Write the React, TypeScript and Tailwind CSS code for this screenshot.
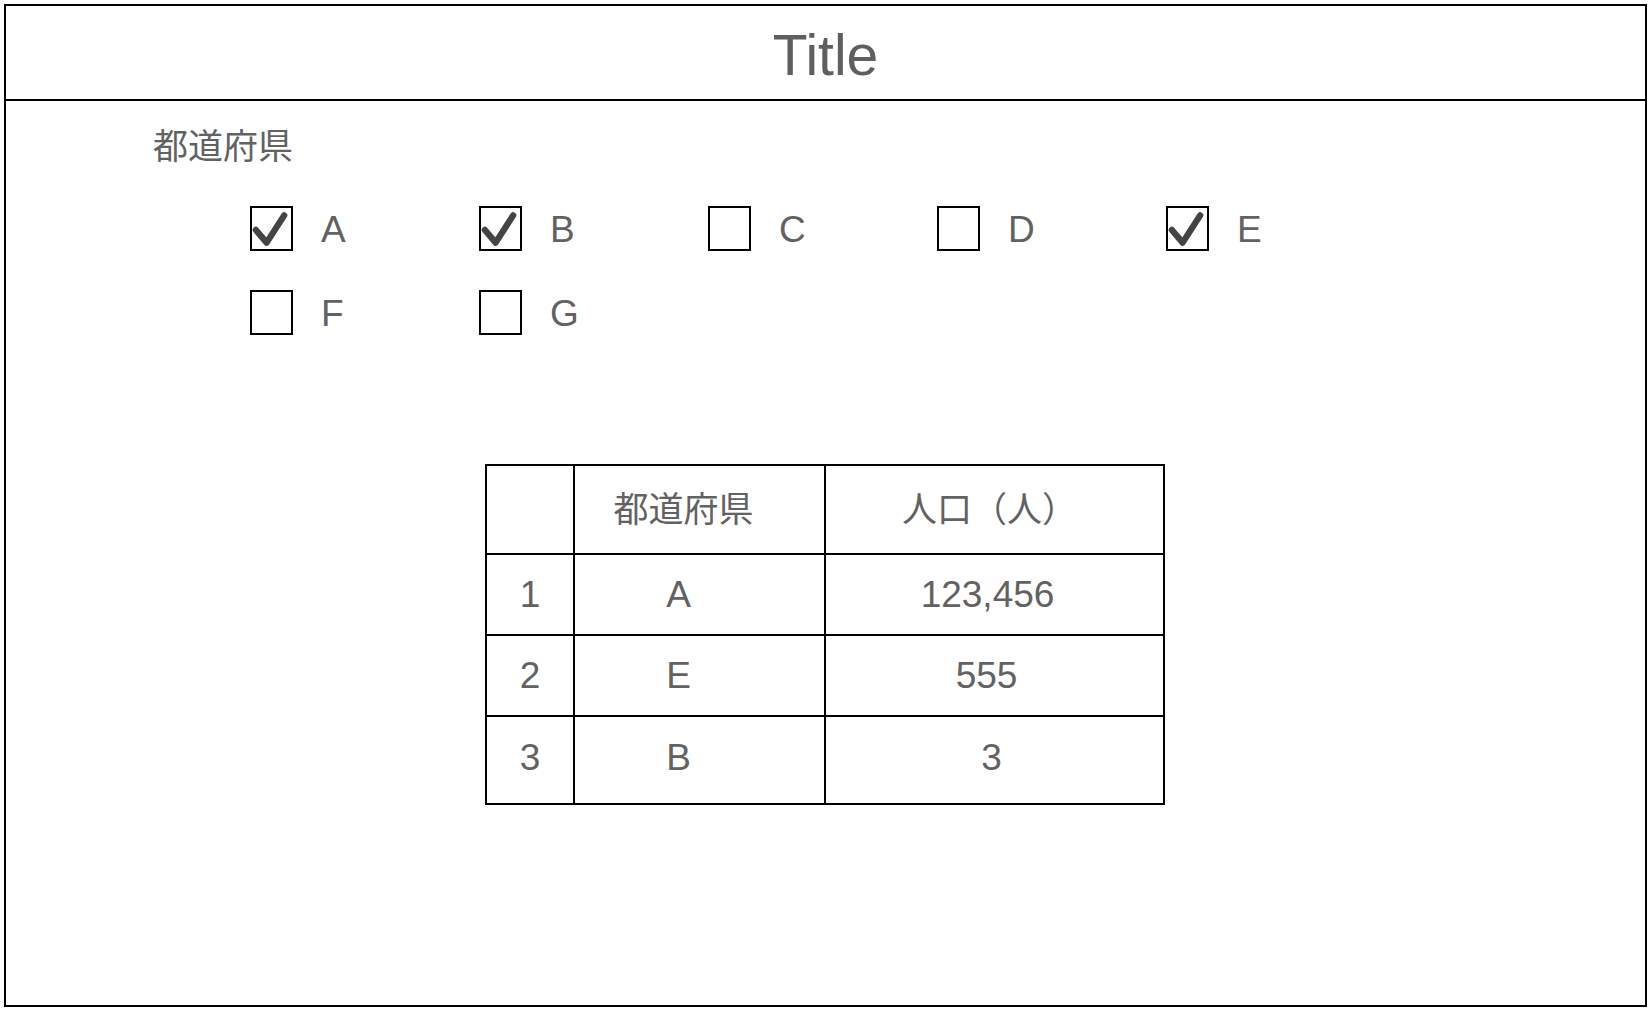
import React from "react";

const FONT = { fontFamily: '"Liberation Sans", "Noto Sans CJK JP", sans-serif' };

function Check() {
  return (
    <svg width="40" height="40" viewBox="0 0 40 40" className="block">
      <polyline
        points="4,21 15,34 33,6"
        fill="none"
        stroke="#444444"
        strokeWidth="6.5"
        strokeLinecap="round"
        strokeLinejoin="round"
      />
    </svg>
  );
}

function Box({ label, checked }: { label: string; checked: boolean }) {
  return (
    <div className="w-[229px] flex items-center">
      <div className="w-[43px] h-[45px] border-2 border-black flex items-center justify-center shrink-0">
        {checked ? <Check /> : null}
      </div>
      <span className="ml-[28px] text-[37px] leading-none text-[#626262] mt-[2px]">{label}</span>
    </div>
  );
}

const rows = [
  { n: "1", p: "A", v: "123,456", vp: "pr-[14px]", pb: "", h: "h-[81px]" },
  { n: "2", p: "E", v: "555", vp: "pr-[16px]", pb: "", h: "h-[81px]" },
  { n: "3", p: "B", v: "3", vp: "pr-[6px]", pb: "pb-[6px]", h: "h-[88px]" },
];

export default function App() {
  return (
    <div className="w-[1650px] h-[1012px] bg-white pt-[4px] pl-[4px]" style={FONT}>
      <div className="w-[1643px] h-[1003px] border-2 border-black flex flex-col">
        <div className="h-[95px] border-b-2 border-black flex items-center justify-center shrink-0">
          <span className="text-[57px] leading-none text-[#5f5f5f] mt-[6px]">Title</span>
        </div>
        <div className="flex flex-col">
          <div className="pl-[147px] mt-[28px] text-[35px] leading-none text-[#626262]">都道府県</div>
          <div className="pl-[244px] mt-[42px] flex flex-col gap-[39px]">
            <div className="flex">
              <Box label="A" checked />
              <Box label="B" checked />
              <Box label="C" checked={false} />
              <Box label="D" checked={false} />
              <Box label="E" checked />
            </div>
            <div className="flex">
              <Box label="F" checked={false} />
              <Box label="G" checked={false} />
            </div>
          </div>
          <div className="ml-[479px] mt-[129px]">
            <table className="border-collapse text-[#626262]">
              <tbody>
                <tr className="h-[89px]">
                  <td className="w-[88px] border-2 border-black p-0"></td>
                  <td className="w-[251px] border-2 border-black p-0 text-center text-[35px] leading-none pr-[32px]">都道府県</td>
                  <td className="w-[339px] border-2 border-black p-0 text-center text-[35px] leading-none pr-[10px]">人口（人）</td>
                </tr>
                {rows.map((r) => (
                  <tr key={r.n} className={r.h}>
                    <td className={"border-2 border-black p-0 text-center text-[37px] leading-none " + r.pb}>{r.n}</td>
                    <td className={"border-2 border-black p-0 text-center text-[37px] leading-none pr-[42px] " + r.pb}>{r.p}</td>
                    <td className={"border-2 border-black p-0 text-center text-[37px] leading-none " + r.vp + " " + r.pb}>{r.v}</td>
                  </tr>
                ))}
              </tbody>
            </table>
          </div>
        </div>
      </div>
    </div>
  );
}
